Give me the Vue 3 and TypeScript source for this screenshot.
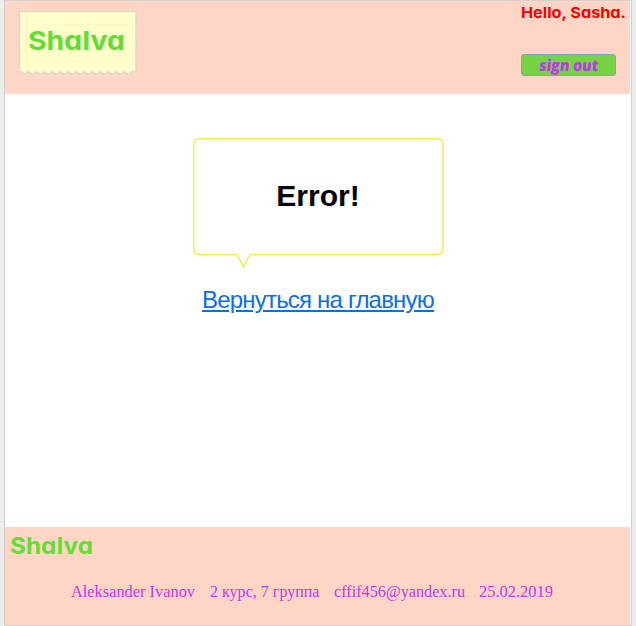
<script setup lang="ts">
const user: string = 'Sasha'
const details: { text: string; width: number }[] = [
  { text: 'Aleksander Ivanov', width: 124 },
  { text: '2 курс, 7 группа', width: 109.5 },
  { text: 'cffif456@yandex.ru', width: 131 },
  { text: '25.02.2019', width: 74 },
]
// Torn lower edge, drawn from right to left.
const teeth: string = Array.from({ length: 14 }, (_, i) => `L${109.5 - i * 8} 63.2 L${105.5 - i * 8} 60.5`).join(' ')
const notePath: string = `M.5.7H117V60.5H113 ${teeth} L.5 61Z`
</script>

<template>
  <div class="page">
    <header class="header">
      <div class="note">
        <svg width="118" height="64" viewBox="0 0 118 64">
          <path class="paper" :d="notePath" />
          <path class="rule" d="M1 13.5H116M1 25.5H116M1 38.5H116M1 50.5H116" />
          <path class="margin" d="M7.5 1.5V60" />
          <text class="brand" x="9" y="39" font-size="26" textLength="97" lengthAdjust="spacingAndGlyphs">ShaIva</text>
        </svg>
      </div>
      <div class="account">
        <svg width="106" height="24" viewBox="0 0 106 24">
          <text class="hello" x="0" y="17" font-size="15" textLength="105" lengthAdjust="spacingAndGlyphs">Hello, {{ user }}.</text>
        </svg>
        <button class="signout">
          <svg width="93" height="20" viewBox="0 0 93 20">
            <text class="signtext" x="18.5" y="15.5" font-size="16" textLength="59" lengthAdjust="spacingAndGlyphs" transform="skewX(-6)">sign out</text>
          </svg>
        </button>
      </div>
    </header>
    <main class="main">
      <div class="bubble">
        <svg class="outline" width="251" height="132" viewBox="0 0 251 132">
          <path d="M6.5.7H244.5Q250 .7 250 6.5V111Q250 116.5 244.5 116.5H57L50.5 129L44 116.5H6.5Q.8 116.5 .8 111V6.5Q.8 .7 6.5 .7Z" />
        </svg>
        <h1>Error!</h1>
      </div>
      <a class="home" href="#">Вернуться на главную</a>
    </main>
    <footer class="footer">
      <svg class="footlogo" width="90" height="32" viewBox="0 0 90 32">
        <text class="brand" x="0" y="26" font-size="23" textLength="83" lengthAdjust="spacingAndGlyphs">ShaIva</text>
      </svg>
      <div class="details">
        <svg v-for="item in details" :key="item.text" :width="item.width" height="24">
          <text x="0" y="17" font-size="16" :textLength="item.width" lengthAdjust="spacingAndGlyphs">{{ item.text }}</text>
        </svg>
      </div>
    </footer>
  </div>
</template>

<style>
body { background: #ececec; overflow: hidden; }
</style>

<style scoped>
.page {
  box-sizing: border-box;
  width: 628px;
  height: 626px;
  margin-left: 4px;
  padding-right: 1px;
  border: 1px solid #d8d0cd;
  background: #fff;
  display: flex;
  flex-direction: column;
}
svg { display: block; overflow: visible; }
.header {
  box-sizing: border-box;
  height: 93px;
  padding: 10px 4px 0 14px;
  background: #ffd5c5;
  display: flex;
  justify-content: space-between;
}
.paper { fill: #ffffcb; stroke: #dcd6cb; stroke-width: 1.3; }
.rule { fill: none; stroke: #fffac5; stroke-width: 1; }
.margin { fill: none; stroke: #ffeec2; stroke-width: 1; }
.brand { fill: #65dc36; font-family: Inter, sans-serif; font-weight: 650; font-feature-settings: "cv11"; }
.account { width: 105px; margin-top: -10px; }
.hello { fill: #f50000; font-family: Inter, sans-serif; font-weight: 700; font-feature-settings: "cv11"; }
.signout {
  display: block;
  box-sizing: border-box;
  width: 95px;
  height: 22px;
  margin: 29px 0 0;
  padding: 0;
  border: 1px solid #79a8b8;
  border-radius: 3px;
  background: #78d245;
}
.signtext { fill: #bd39e7; font-family: "Open Sans", sans-serif; font-weight: 800; }
.main {
  flex: 1;
  padding: 44px 0 0 1px;
  display: flex;
  flex-direction: column;
  align-items: center;
}
.bubble {
  position: relative;
  width: 251px;
  height: 118px;
  display: flex;
  justify-content: center;
  align-items: center;
}
.outline { position: absolute; top: 0; left: 0; }
.outline path { fill: none; stroke: #f6e94b; stroke-width: 1.4; }
h1 { position: relative; margin: -3px 0 0; font: bold 30px/36px "Liberation Sans", Arial, sans-serif; color: #000; }
.home {
  margin-top: 29px;
  font: 24px/30px "Liberation Sans", Arial, sans-serif;
  letter-spacing: -0.8px;
  color: #0b6fe4;
  text-decoration: underline;
}
.footer {
  box-sizing: border-box;
  height: 98px;
  background: #ffd5c5;
  padding: 1px 0 0 5px;
}
.details {
  display: flex;
  gap: 14.5px;
  margin: 20px 0 0 61px;
  fill: #bd39e7;
  font-family: Georgia, "Liberation Serif", serif;
}
</style>
